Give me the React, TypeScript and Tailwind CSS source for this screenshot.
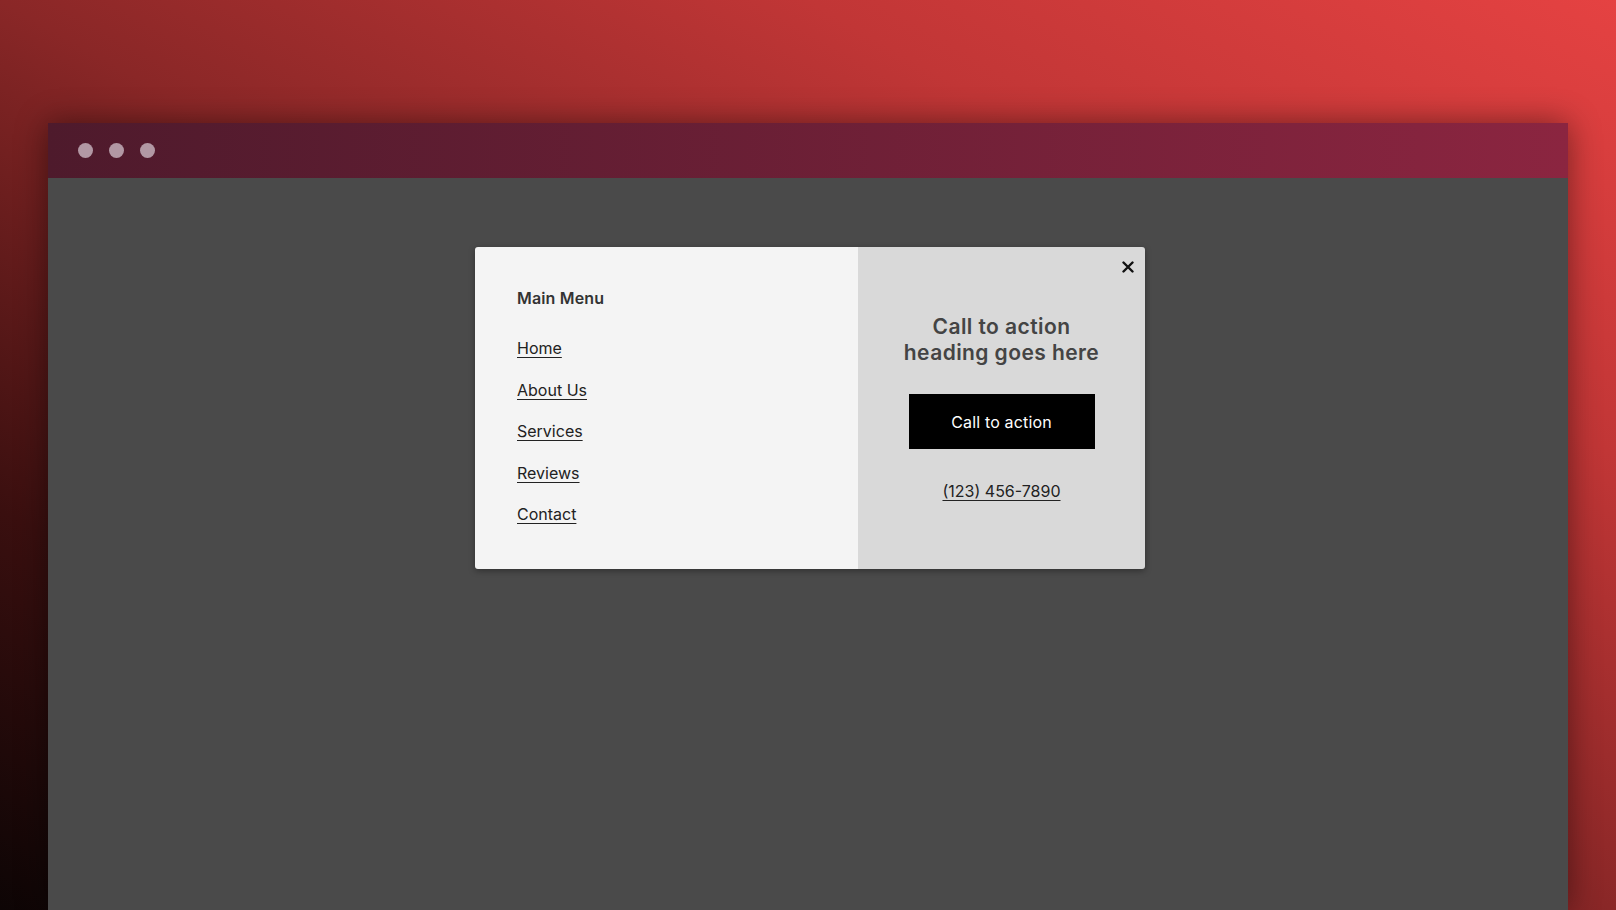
import React from "react";

const menuLinks = ["Home", "About Us", "Services", "Reviews", "Contact"];

const CloseIcon = () => (
  <svg width="12" height="12" viewBox="0 0 12 12" fill="none">
    <path d="M1.5 1.5l9 9M10.5 1.5l-9 9" stroke="#111" strokeWidth="2.4" strokeLinecap="round" />
  </svg>
);

const MenuModal = () => {
  return (
    <div className="flex w-[670px] h-[322px] mx-auto rounded-[3px] overflow-hidden shadow-[0_2px_6px_rgba(0,0,0,0.35)]">
      <div className="w-[383px] bg-[#f4f4f4] pl-[42px] pt-[39px]">
        <div className="text-[16px] leading-6 font-semibold text-[#333] tracking-[0.01em]">Main Menu</div>
        <nav className="flex flex-col gap-[17.6px] mt-[26px]">
          {menuLinks.map((link) => (
            <a
              key={link}
              href="#"
              className="w-fit text-[16px] leading-6 text-[#222] underline underline-offset-[3px] decoration-1"
            >
              {link}
            </a>
          ))}
        </nav>
      </div>
      <div className="relative flex-1 bg-[#d9d9d9] flex flex-col items-center pt-[67px]">
        <button className="absolute top-[14px] right-[11px]">
          <CloseIcon />
        </button>
        <h2 className="text-[21px] leading-[26px] font-semibold text-[#444] text-center tracking-[0.02em]">
          Call to action
          <br />
          heading goes here
        </h2>
        <button className="mt-[28px] w-[186px] h-[55px] bg-black text-white text-[16px] tracking-[0.01em]">
          Call to action
        </button>
        <a
          href="#"
          className="mt-[30px] text-[16px] leading-6 text-[#222] underline underline-offset-[3px] decoration-1"
        >
          (123) 456-7890
        </a>
      </div>
    </div>
  );
};

export default function App() {
  return (
    <div
      className="h-screen w-full overflow-hidden flex flex-col px-[48px] pt-[123px] bg-[linear-gradient(to_top_right,#0d0505_0%,#3a0f0f_22%,#8a2727_50%,#c13636_75%,#e54242_100%)]"
      style={{ fontFamily: "Inter, 'Noto Sans', sans-serif" }}
    >
      <div className="flex-1 flex flex-col shadow-[0_0_30px_rgba(0,0,0,0.45)]">
        <div className="h-[55px] shrink-0 flex items-center gap-[16px] pl-[30px] bg-[linear-gradient(to_right,#4e1a2c,#8b2540)]">
          <span className="w-[15px] h-[15px] rounded-full bg-[#b298a4]" />
          <span className="w-[15px] h-[15px] rounded-full bg-[#b298a4]" />
          <span className="w-[15px] h-[15px] rounded-full bg-[#b298a4]" />
        </div>
        <div className="flex-1 bg-[#4a4a4a] pt-[69px] pl-1">
          <MenuModal />
        </div>
      </div>
    </div>
  );
}
